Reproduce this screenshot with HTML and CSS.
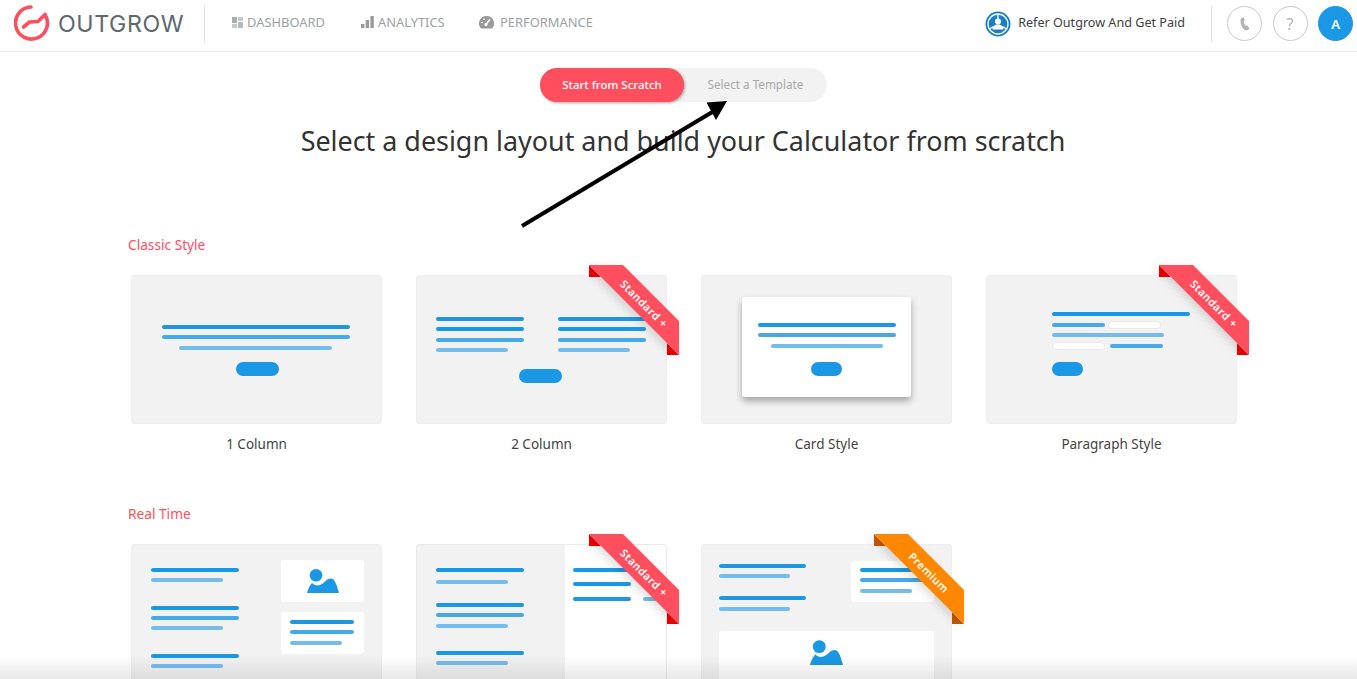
FILE: index.html
```html
<!DOCTYPE html>
<html lang="en">
<head>
<meta charset="utf-8">
<title>Outgrow - Select a design layout</title>
<link rel="stylesheet" href="styles.css">
</head>
<body>
<header class="topbar">
  <a class="brand">
    <svg class="brand-mark" viewBox="0 0 36 38" width="36" height="38"><path d="M17 3A16 16 0 1 0 31 10.500L24 17.500 15.500 18 9.500 23" fill="none" stroke="#ff4f5e" stroke-width="3.600" stroke-linecap="round" stroke-linejoin="round"/></svg>
    <span class="brand-name">OUTGROW</span>
  </a>
  <nav class="nav">
    <a class="nav-item nav-dash"><svg width="11" height="11" viewBox="0 0 11 11"><rect width="5" height="6" fill="#a9adb0"/><rect x="6" width="5" height="4" fill="#c3c9cc"/><rect y="7" width="5" height="4" fill="#c3c9cc"/><rect x="6" y="5" width="5" height="6" fill="#b4bbbf"/></svg>DASHBOARD</a>
    <a class="nav-item nav-ana"><svg width="13" height="12" viewBox="0 0 13 12"><rect y="8" width="3.400" height="4" fill="#9a9a9a"/><rect x="4.700" y="4" width="3.400" height="8" fill="#9a9a9a"/><rect x="9.400" width="3.400" height="12" fill="#9a9a9a"/></svg>ANALYTICS</a>
    <a class="nav-item nav-perf"><svg width="15" height="13" viewBox="0 0 15 13"><path d="M7.500 0A7.500 7.500 0 0 0 2 12.600L13 12.600A7.500 7.500 0 0 0 7.500 0Z" fill="#9a9a9a"/><path d="M7 8.500L10.800 3.500" stroke="#fff" stroke-width="1.400"/><circle cx="7" cy="8.500" r="1.500" fill="#fff"/><circle cx="3" cy="6.500" r=".8" fill="#fff"/><circle cx="5" cy="3.200" r=".8" fill="#fff"/></svg>PERFORMANCE</a>
  </nav>
  <a class="refer">
    <svg width="26" height="26" viewBox="0 0 26 26"><circle cx="13" cy="13" r="12.500" fill="#1a7fc4"/><circle cx="13" cy="13" r="10" fill="none" stroke="#fff" stroke-width="1.300"/><path d="M13 3v5M4.500 18l4-2.500M21.500 18l-4-2.500" stroke="#fff" stroke-width="1.300"/><circle cx="13" cy="10.500" r="3" fill="#fff"/><path d="M7.500 18.500c0-3.500 2.500-5 5.500-5s5.500 1.500 5.500 5z" fill="#fff"/></svg>
    <span>Refer Outgrow And Get Paid</span>
  </a>
  <div class="actions">
    <a class="round"><svg width="10" height="14" viewBox="0 0 10 14"><path d="M2.700.600L.800 1.800C-.400 5.500 2 11.500 5.500 13.500L7.800 13C8.800 12.600 9.300 12 9.200 11.200L7.500 8.800C7 8.300 6.300 8.300 5.600 8.900 4.500 7.500 3.900 6 3.700 4.600 4.500 4.300 4.800 3.800 4.700 3.100L3.800 .800C3.500.400 3.100.400 2.700.600Z" fill="#b3b3b3"/></svg></a>
    <a class="round round-q">?</a>
    <a class="round round-user">A</a>
  </div>
</header>

<main class="page">
  <div class="switch">
    <button class="switch-on">Start from Scratch</button>
    <button class="switch-off">Select a Template</button>
  </div>
  <h1 class="title">Select a design layout and build your Calculator from scratch</h1>

  <section class="group">
    <h2 class="group-name">Classic Style</h2>
    <div class="cards">
      <article class="card">
        <div class="thumb t-one">
          <i class="ln c1 w188"></i><i class="ln c2 w188"></i><i class="ln c3 w153"></i><b class="cta"></b>
        </div>
        <p class="card-name">1 Column</p>
      </article>
      <article class="card">
        <div class="thumb t-two">
          <div class="two-cols">
            <div class="stack"><i class="ln c1 w88"></i><i class="ln c1 w88"></i><i class="ln c2 w88"></i><i class="ln c3 w72"></i></div>
            <div class="stack"><i class="ln c1 w88"></i><i class="ln c1 w88"></i><i class="ln c2 w88"></i><i class="ln c3 w72"></i></div>
          </div>
          <b class="cta"></b>
          <svg class="ribbon" width="90" height="90" viewBox="0 0 90 90"><path class="fold-red" d="M0 0V12H12zM78 78V90H90z"/><path class="band-red" d="M0 0H34L90 56V90Z"/><text class="ribbon-text" transform="translate(52 41.500) rotate(45)" text-anchor="middle">Standard +</text></svg>
        </div>
        <p class="card-name">2 Column</p>
      </article>
      <article class="card">
        <div class="thumb t-card">
          <div class="sheet"><i class="ln c1 w138"></i><i class="ln c2 w138"></i><i class="ln c3 w112"></i><b class="cta cta-small"></b></div>
        </div>
        <p class="card-name">Card Style</p>
      </article>
      <article class="card">
        <div class="thumb t-para">
          <i class="ln c1 w138"></i>
          <div class="para-row"><i class="ln c2 w53"></i><i class="blank"></i></div>
          <i class="ln c3 w112"></i>
          <div class="para-row para-row-b"><i class="blank"></i><i class="ln c2 w53"></i></div>
          <b class="cta cta-small"></b>
          <svg class="ribbon" width="90" height="90" viewBox="0 0 90 90"><path class="fold-red" d="M0 0V12H12zM78 78V90H90z"/><path class="band-red" d="M0 0H34L90 56V90Z"/><text class="ribbon-text" transform="translate(52 41.500) rotate(45)" text-anchor="middle">Standard +</text></svg>
        </div>
        <p class="card-name">Paragraph Style</p>
      </article>
    </div>
  </section>

  <section class="group group-next">
    <h2 class="group-name">Real Time</h2>
    <div class="cards">
      <article class="card">
        <div class="thumb t-rta">
          <div class="stack rt-left">
            <div class="stack"><i class="ln c1 w88"></i><i class="ln c3 w72"></i></div>
            <div class="stack"><i class="ln c1 w88"></i><i class="ln c2 w88"></i><i class="ln c3 w72"></i></div>
            <div class="stack"><i class="ln c1 w88"></i><i class="ln c3 w72"></i></div>
          </div>
          <div class="rt-right">
            <div class="panel panel-pic"><svg width="32" height="24" viewBox="0 0 32 24"><circle cx="9" cy="6.300" r="6.300" fill="#1a98e6"/><path d="M0 24C1 20 3 16 5 14C8 17 12 17 15 15C18 13 20 9.500 24 9.500C28 9.500 30 17 32 24Z" fill="#1a98e6"/></svg></div>
            <div class="panel panel-lines"><i class="ln c1 w64"></i><i class="ln c2 w64"></i><i class="ln c3 w52"></i></div>
          </div>
        </div>
      </article>
      <article class="card">
        <div class="thumb t-rtb">
          <div class="stack rtb-left">
            <div class="stack rtb-a"><i class="ln c1 w88"></i><i class="ln c3 w72"></i></div>
            <div class="stack"><i class="ln c1 w88"></i><i class="ln c2 w88"></i><i class="ln c3 w72"></i></div>
            <div class="stack rtb-c"><i class="ln c1 w88"></i><i class="ln c3 w72"></i></div>
          </div>
          <div class="rtb-right">
            <i class="ln c1 w58"></i><i class="ln c1 w58"></i>
            <div class="rtb-row"><i class="ln c1 w58"></i><i class="ln c3 w24"></i></div>
          </div>
          <svg class="ribbon" width="90" height="90" viewBox="0 0 90 90"><path class="fold-red" d="M0 0V12H12zM78 78V90H90z"/><path class="band-red" d="M0 0H34L90 56V90Z"/><text class="ribbon-text" transform="translate(52 41.500) rotate(45)" text-anchor="middle">Standard +</text></svg>
        </div>
      </article>
      <article class="card">
        <div class="thumb t-rtc">
          <div class="rtc-top">
            <div class="stack rtc-left">
              <div class="stack"><i class="ln c1 w87"></i><i class="ln c3 w71"></i></div>
              <div class="stack"><i class="ln c1 w87"></i><i class="ln c3 w71"></i></div>
            </div>
            <div class="panel rtc-panel"><i class="ln c1 w64"></i><i class="ln c2 w64"></i><i class="ln c3 w52"></i></div>
          </div>
          <div class="panel rtc-pic"><svg width="33" height="25" viewBox="0 0 32 24"><circle cx="9" cy="6.300" r="6.300" fill="#1a98e6"/><path d="M0 24C1 20 3 16 5 14C8 17 12 17 15 15C18 13 20 9.500 24 9.500C28 9.500 30 17 32 24Z" fill="#1a98e6"/></svg></div>
          <svg class="ribbon" width="90" height="90" viewBox="0 0 90 90"><path class="fold-orange" d="M0 0V12H12zM78 78V90H90z"/><path class="band-orange" d="M0 0H34L90 56V90Z"/><text class="ribbon-text" transform="translate(52 41.500) rotate(45)" text-anchor="middle">Premium</text></svg>
        </div>
      </article>
    </div>
  </section>
</main>

<svg class="arrow" width="230" height="140" viewBox="0 0 230 140"><path d="M2 128L194 13" stroke="#000" stroke-width="4" fill="none"/><path d="M207 3L186.500 4.500 196 22Z" fill="#000"/></svg>
<div class="fade"></div>
</body>
</html>
```
FILE: styles.css
```css
* { box-sizing: border-box; }
html, body { height: 100%; margin: 0; overflow: hidden; background: #fff; }
body { font-family: "Noto Sans", "Open Sans", sans-serif; color: #333; position: relative; }

.topbar { height: 52px; display: flex; align-items: center; border-bottom: 1px solid #e9e9e9; padding: 0 4px 4px 14px; }
.brand { display: flex; align-items: center; width: 191px; height: 38px; border-right: 1px solid #dfe2e3; }
.brand-mark { margin-top: -2px; }
.brand-name { font-family: "Inter", sans-serif; font-size: 23.200px; letter-spacing: .6px; color: #5d6870; margin-left: 8px; }
.nav { display: flex; align-items: center; margin: -3px 0 0 27px; }
.nav-item { display: flex; align-items: center; font-size: 12.900px; color: #9da1a4; }
.nav-item svg { margin-right: 4px; }
.nav-dash { width: 129px; }
.nav-ana { width: 118px; }
.nav-perf svg { margin-right: 6px; }
.refer { display: flex; align-items: center; margin-left: auto; font-size: 12.600px; color: #3f3f3f; height: 26px; }
.refer svg { margin-right: 8px; }
.refer span { margin: -2px 0 0 -1px; }
.actions { display: flex; align-items: center; gap: 10.500px; height: 36px; margin-left: 26px; padding-left: 15px; border-left: 1px solid #dfe2e3; }
.round { width: 35px; height: 35px; border-radius: 50%; border: 1px solid #c6c8c9; display: flex; align-items: center; justify-content: center; }
.round-q { font-size: 16px; color: #b3b3b3; }
.round-user { background: #1a98e6; border-color: #1a98e6; color: #fff; font-size: 13px; font-weight: 600; }

.page { padding: 16px 0 0 131px; }
.switch { width: 287px; height: 34px; margin-left: 409px; display: flex; background: #f2f2f2; border-radius: 17px; }
.switch button { border: 0; background: none; font: 11.500px "Noto Sans", sans-serif; padding: 0 0 2px; height: 34px; }
.switch-on { width: 144px; color: #fff; background: #ff4f5e !important; border-radius: 17px; box-shadow: 1px 1px 3px rgba(0,0,0,.35); font-weight: 500 !important; }
.switch-off { flex: 1; color: #a9a9a9; font-size: 11.700px !important; }
.title { margin: 19px 0 0 -131px; text-align: center; font-size: 26.900px; line-height: 40px; font-weight: 400; color: #333; padding-left: 9px; }

.group { margin-top: 74px; }
.group-next { margin-top: 50px; }
.group-name { margin: 0 0 20px -3px; font-size: 13.700px; line-height: 20px; font-weight: 400; color: #ff4f5e; }
.cards { display: grid; grid-template-columns: repeat(4, 251px); column-gap: 34px; }
.card-name { margin: 10px 0 0; text-align: center; font-size: 13.500px; line-height: 20px; color: #444; }

.thumb { position: relative; height: 149px; background: #f2f2f3; border: 1px solid #eceef1; border-radius: 3px; }
.ln { display: block; height: 4px; border-radius: 2px; flex: none; }
.c1 { background: #1a98e6; }
.c2 { background: #46a9e9; }
.c3 { background: #74bcee; }
.w188 { width: 188px; } .w153 { width: 153px; } .w138 { width: 138px; } .w112 { width: 112px; }
.w88 { width: 88px; } .w87 { width: 87px; } .w72 { width: 72px; } .w71 { width: 71px; }
.w64 { width: 64px; } .w58 { width: 58px; } .w53 { width: 53px; } .w52 { width: 52px; } .w24 { width: 24px; }
.cta { display: block; width: 43px; height: 14px; border-radius: 7px; background: #1a98e6; flex: none; }
.cta-small { width: 31px; }
.stack { display: flex; flex-direction: column; gap: 6.300px; }

.ribbon { position: absolute; top: -11px; right: -13px; overflow: visible; }
.band-red { fill: #ff4f5e; filter: drop-shadow(-3px 3px 4px rgba(0,0,0,.13)); }
.band-orange { fill: #ff8800; filter: drop-shadow(-3px 3px 4px rgba(0,0,0,.13)); }
.fold-red { fill: #f00000; }
.fold-orange { fill: #c75a00; }
.ribbon-text { font: 600 10.800px "Noto Sans", sans-serif; fill: #fff; letter-spacing: .5px; }

.t-one { display: flex; flex-direction: column; align-items: center; gap: 6.300px; padding: 49px 2px 0 0; }
.t-one .cta { margin: 6px 0 0 4px; }
.t-two { display: flex; flex-direction: column; padding: 41px 0 0 19px; }
.two-cols { display: flex; gap: 34px; }
.t-two .cta { margin: 17.500px 0 0 83px; }
.t-card { padding: 21px 40px 0; }
.sheet { height: 100px; background: #fff; border-radius: 3px; box-shadow: 0 4px 7px rgba(0,0,0,.32); display: flex; flex-direction: column; align-items: center; gap: 6.300px; padding-top: 26px; }
.sheet .cta { margin-top: 8px; }
.t-para { display: flex; flex-direction: column; gap: 6.500px; padding: 36px 0 0 65px; }
.para-row { display: flex; align-items: center; gap: 2.500px; height: 4px; }
.para-row-b { gap: 5px; }
.blank { display: block; width: 53px; height: 8px; border-radius: 4px; background: #fff; border: 1px solid #e6e8ea; flex: none; }
.t-para .cta { margin-top: 8px; }

.t-rta { display: flex; justify-content: space-between; padding: 23px 17px 0 19px; }
.rt-left { gap: 23.500px; }
.rt-right { width: 83px; display: flex; flex-direction: column; gap: 10px; margin-top: -8px; }
.panel { background: #fff; border-radius: 3px; }
.panel-pic { height: 42px; display: flex; justify-content: center; align-items: center; }
.panel-lines { height: 42px; display: flex; flex-direction: column; gap: 6.300px; padding: 8px 9px 0; }
.t-rtb { display: flex; background: linear-gradient(90deg, #f2f2f3 148px, #fff 148px); border-color: #e8ebee; padding: 23px 0 0 19px; }
.rtb-left { gap: 19px; width: 137px; flex: none; }
.rtb-a { gap: 8px; }
.rtb-c { margin-top: 4px; }
.rtb-right { display: flex; flex-direction: column; gap: 10.300px; padding-left: 0; }
.rtb-row { display: flex; gap: 12px; }
.t-rtc { padding: 19px 17px 0 17px; }
.rtc-top { display: flex; justify-content: space-between; height: 67px; }
.rtc-left { gap: 18px; }
.rtc-panel { width: 83px; height: 41px; margin-top: -3px; display: flex; flex-direction: column; gap: 6.300px; padding: 7px 9px 0; }
.rtc-pic { height: 70px; padding-top: 9px; text-align: center; }

.arrow { position: absolute; left: 520px; top: 98px; }
.fade { position: absolute; left: 0; right: 0; bottom: 0; height: 24px; background: linear-gradient(rgba(0,0,0,0), rgba(0,0,0,.09)); }
```
